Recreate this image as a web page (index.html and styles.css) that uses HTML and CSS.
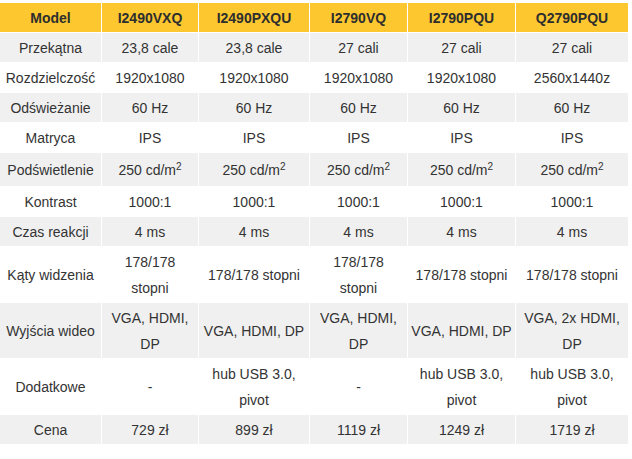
FILE: index.html
```html
<!DOCTYPE html>
<html lang="pl">
<head>
<meta charset="utf-8">
<link rel="stylesheet" href="styles.css">
</head>
<body>
<table class="spec">
  <colgroup>
    <col class="c1"><col class="c2"><col class="c3"><col class="c4"><col class="c5"><col class="c6">
  </colgroup>
  <thead>
    <tr><th>Model</th><th>I2490VXQ</th><th>I2490PXQU</th><th>I2790VQ</th><th>I2790PQU</th><th>Q2790PQU</th></tr>
  </thead>
  <tbody>
    <tr class="g"><td>Przekątna</td><td>23,8 cale</td><td>23,8 cale</td><td>27 cali</td><td>27 cali</td><td>27 cali</td></tr>
    <tr><td>Rozdzielczość</td><td>1920x1080</td><td>1920x1080</td><td>1920x1080</td><td>1920x1080</td><td>2560x1440z</td></tr>
    <tr class="g"><td>Odświeżanie</td><td>60 Hz</td><td>60 Hz</td><td>60 Hz</td><td>60 Hz</td><td>60 Hz</td></tr>
    <tr><td>Matryca</td><td>IPS</td><td>IPS</td><td>IPS</td><td>IPS</td><td>IPS</td></tr>
    <tr class="g tall"><td>Podświetlenie</td><td>250 cd/m<sup>2</sup></td><td>250 cd/m<sup>2</sup></td><td>250 cd/m<sup>2</sup></td><td>250 cd/m<sup>2</sup></td><td>250 cd/m<sup>2</sup></td></tr>
    <tr><td>Kontrast</td><td>1000:1</td><td>1000:1</td><td>1000:1</td><td>1000:1</td><td>1000:1</td></tr>
    <tr class="g"><td>Czas reakcji</td><td>4 ms</td><td>4 ms</td><td>4 ms</td><td>4 ms</td><td>4 ms</td></tr>
    <tr><td>Kąty widzenia</td><td>178/178 stopni</td><td>178/178 stopni</td><td>178/178 stopni</td><td>178/178 stopni</td><td>178/178 stopni</td></tr>
    <tr class="g"><td>Wyjścia wideo</td><td>VGA, HDMI, DP</td><td>VGA, HDMI, DP</td><td>VGA, HDMI, DP</td><td>VGA, HDMI, DP</td><td>VGA, 2x HDMI, DP</td></tr>
    <tr><td>Dodatkowe</td><td>-</td><td>hub USB 3.0, pivot</td><td>-</td><td>hub USB 3.0, pivot</td><td>hub USB 3.0, pivot</td></tr>
    <tr class="g"><td>Cena</td><td>729 zł</td><td>899 zł</td><td>1119 zł</td><td>1249 zł</td><td>1719 zł</td></tr>
  </tbody>
</table>
</body>
</html>
```
FILE: styles.css
```css
html, body {
  margin: 0;
  padding: 0;
  background: #ffffff;
}
body {
  font-family: "Liberation Sans", Arial, sans-serif;
  font-size: 14px;
  color: #333333;
}
.spec {
  table-layout: fixed;
  width: 630px;
  border-collapse: separate;
  border-spacing: 1px;
  margin: 2px 0 0 -1px;
}
.c1 { width: 101px; }
.c2 { width: 96px; }
.c3 { width: 110px; }
.c4 { width: 97px; }
.c5 { width: 107px; }
.c6 { width: 112px; }
.spec th {
  background: #fdc82f;
  font-weight: bold;
  height: 29px;
  padding: 0 3px;
  line-height: 26px;
  text-align: center;
  vertical-align: middle;
  color: #2e2e2e;
}
.spec td {
  padding: 2px 3px 1px;
  line-height: 26px;
  text-align: center;
  vertical-align: middle;
  background: #ffffff;
}
.spec tr.tall td {
  padding: 4px 3px 3px;
}
.spec tr.g td {
  background: #f0f0f0;
}
.spec sup {
  font-size: 10px;
  line-height: 0;
  vertical-align: 5px;
}
```
